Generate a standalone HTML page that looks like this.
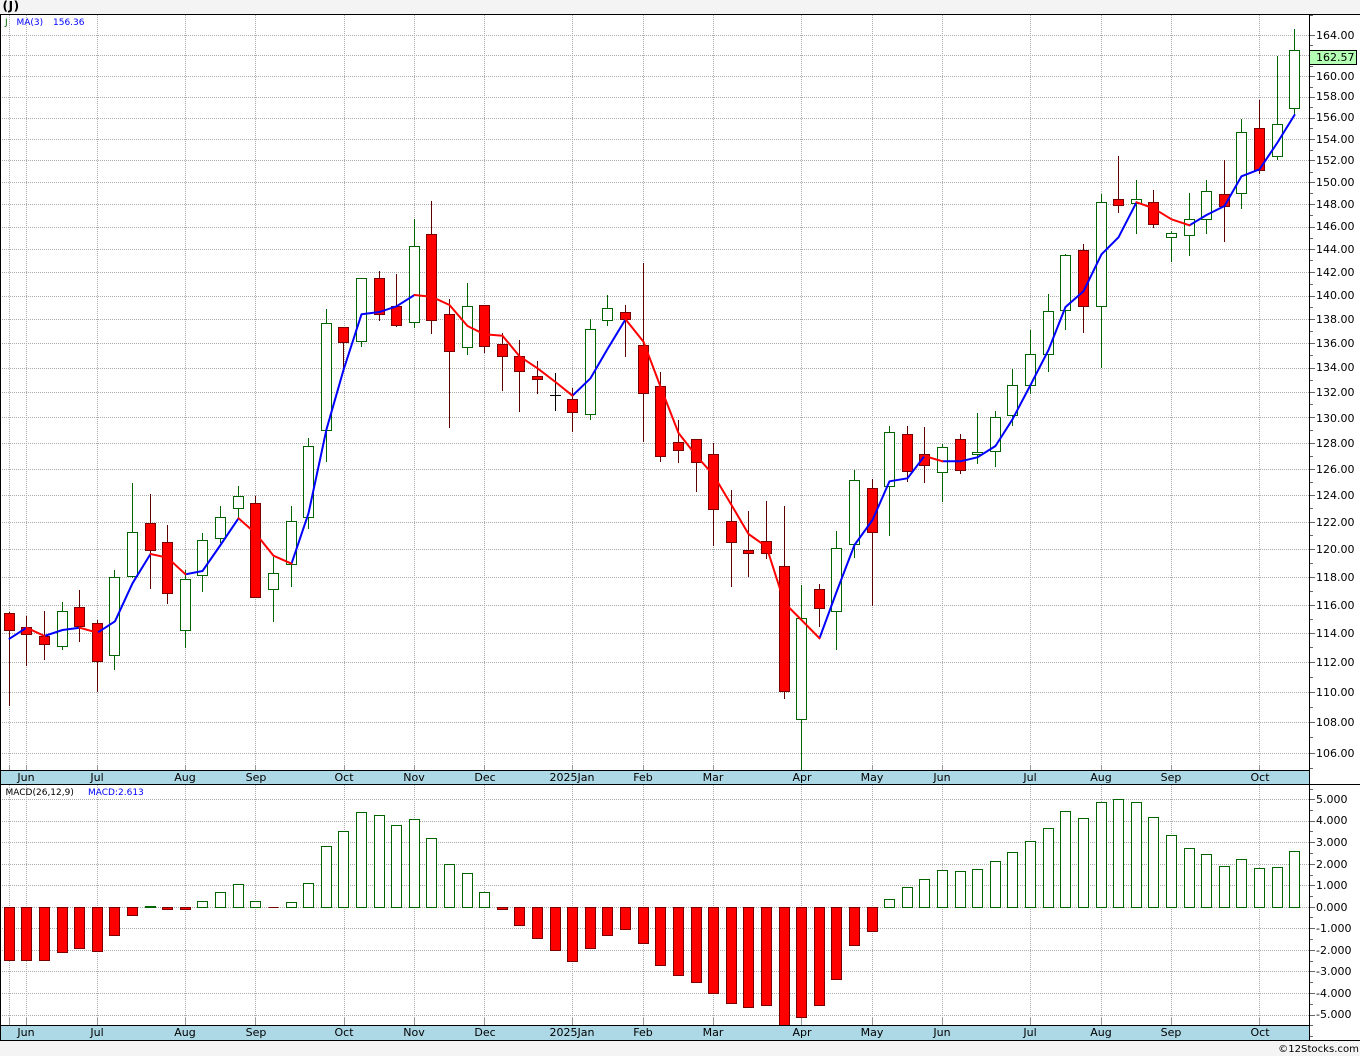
<!DOCTYPE html>
<html><head><meta charset="utf-8"><title>(J)</title>
<style>
html,body{margin:0;padding:0;background:#fff;width:1360px;height:1056px;overflow:hidden}
svg{display:block}
text{font-family:"DejaVu Sans","Liberation Sans",sans-serif;font-size:11px;fill:#000}
.s{font-size:9px}
.gr{stroke:#006400;stroke-width:1;fill:none;shape-rendering:crispEdges}
.rd{stroke:#5e0000;stroke-width:1;fill:none;shape-rendering:crispEdges}
.gb{stroke:#006400;stroke-width:1;fill:#fff;shape-rendering:crispEdges}
.rb{stroke:#7a0000;stroke-width:1;fill:#f00;shape-rendering:crispEdges}
.ma{fill:none;stroke-width:2;stroke-linejoin:round;stroke-linecap:round}
</style></head>
<body>
<svg width="1360" height="1056" viewBox="0 0 1360 1056" xmlns="http://www.w3.org/2000/svg">
<rect x="0" y="0" width="1360" height="14" fill="#f4f4f4"/>
<rect x="0" y="1041" width="1360" height="15" fill="#f4f4f4"/>
<rect x="0" y="771" width="1309" height="13" fill="#add8e6"/>
<rect x="0" y="1026" width="1309" height="14" fill="#add8e6"/>

<!-- grid -->
<path d="M0 35.5H1309M0 55.5H1309M0 76.5H1309M0 97.5H1309M0 118.5H1309M0 139.5H1309M0 160.5H1309M0 182.5H1309M0 204.5H1309M0 227.5H1309M0 249.5H1309M0 272.5H1309M0 296.5H1309M0 319.5H1309M0 343.5H1309M0 368.5H1309M0 392.5H1309M0 417.5H1309M0 443.5H1309M0 469.5H1309M0 495.5H1309M0 522.5H1309M0 549.5H1309M0 577.5H1309M0 605.5H1309M0 633.5H1309M0 662.5H1309M0 692.5H1309M0 722.5H1309M0 753.5H1309M0 799.5H1309M0 821.5H1309M0 842.5H1309M0 864.5H1309M0 885.5H1309M0 907.5H1309M0 928.5H1309M0 950.5H1309M0 971.5H1309M0 993.5H1309M0 1015.5H1309" stroke="#ababab" stroke-width="1" stroke-dasharray="1 1" fill="none" shape-rendering="crispEdges"/>
<path d="M9.5 15V770M26.5 15V770M97.5 15V770M185.5 15V770M255.5 15V770M344.5 15V770M414.5 15V770M484.5 15V770M572.5 15V770M643.5 15V770M713.5 15V770M801.5 15V770M872.5 15V770M942.5 15V770M1030.5 15V770M1101.5 15V770M1171.5 15V770M1259.5 15V770M9.5 785V1025M26.5 785V1025M97.5 785V1025M185.5 785V1025M255.5 785V1025M344.5 785V1025M414.5 785V1025M484.5 785V1025M572.5 785V1025M643.5 785V1025M713.5 785V1025M801.5 785V1025M872.5 785V1025M942.5 785V1025M1030.5 785V1025M1101.5 785V1025M1171.5 785V1025M1259.5 785V1025" stroke="#ababab" stroke-width="1" stroke-dasharray="1 1" fill="none" shape-rendering="crispEdges"/>
<path d="M9.5 1018V1025M26.5 1018V1025M97.5 1018V1025M185.5 1018V1025M255.5 1018V1025M344.5 1018V1025M414.5 1018V1025M484.5 1018V1025M572.5 1018V1025M643.5 1018V1025M713.5 1018V1025M801.5 1018V1025M872.5 1018V1025M942.5 1018V1025M1030.5 1018V1025M1101.5 1018V1025M1171.5 1018V1025M1259.5 1018V1025M9.5 765V770M26.5 765V770M97.5 765V770M185.5 765V770M255.5 765V770M344.5 765V770M414.5 765V770M484.5 765V770M572.5 765V770M643.5 765V770M713.5 765V770M801.5 765V770M872.5 765V770M942.5 765V770M1030.5 765V770M1101.5 765V770M1171.5 765V770M1259.5 765V770" stroke="#999" stroke-width="1" fill="none" shape-rendering="crispEdges"/>

<!-- wicks green -->
<path class="gr" d="M62.5 602V650M114.5 570V670M132.5 483V578M185.5 570V648M202.5 533V592M220.5 506V543M238.5 486V518M273.5 557V622M291.5 506V587M308.5 438V529M326.5 309V462M361.5 278V347M414.5 219V328M467.5 283V355M590.5 319V420M607.5 295V326M801.5 585V770M836.5 531V650M854.5 470V558M889.5 426V536M942.5 444V502M977.5 413V464M995.5 411V467M1012.5 369V426M1030.5 330V394M1048.5 294V372M1065.5 254V330M1101.5 194V368M1136.5 180V234M1171.5 231V262M1189.5 193V256M1206.5 180V234M1241.5 119V209M1277.5 56V160M1294.5 29V115"/>
<!-- wicks red -->
<path class="rd" d="M9.5 612V706M26.5 616V666M44.5 611V660M79.5 590V642M97.5 620V692M150.5 494V589M167.5 525V604M255.5 496V598M343.5 327V369M379.5 271V321M396.5 274V327M431.5 201V334M449.5 299V428M484.5 305V353M502.5 333V391M519.5 340V412M537.5 361V394M572.5 388V432M625.5 305V357M643.5 263V442M660.5 372V462M678.5 420V463M696.5 439V492M713.5 443V546M731.5 490V587M748.5 511V577M766.5 501V559M784.5 506V699M819.5 584V627M872.5 479V606M907.5 426V482M924.5 427V483M960.5 434V474M1083.5 244V333M1118.5 156V213M1153.5 190V228M1224.5 160V242M1259.5 100V174"/>
<!-- doji -->
<path d="M555.5 373V411M550 395.5H561" stroke="#000" stroke-width="1" fill="none" shape-rendering="crispEdges"/>
<!-- bodies green -->
<path class="gb" d="M57.5 611.5h10v35h-10zM109.5 577.5h10v78h-10zM127.5 532.5h10v44h-10zM180.5 579.5h10v51h-10zM197.5 540.5h10v35h-10zM215.5 517.5h10v21h-10zM233.5 496.5h10v12h-10zM268.5 573.5h10v16h-10zM286.5 521.5h10v43h-10zM303.5 446.5h10v71h-10zM321.5 323.5h10v107h-10zM356.5 278.5h10v63h-10zM409.5 246.5h10v76h-10zM462.5 306.5h10v41h-10zM585.5 329.5h10v85h-10zM602.5 308.5h10v12h-10zM796.5 618.5h10v101h-10zM831.5 548.5h10v63h-10zM849.5 480.5h10v64h-10zM884.5 432.5h10v54h-10zM937.5 447.5h10v25h-10zM972.5 452.5h10v2h-10zM990.5 417.5h10v34h-10zM1007.5 385.5h10v30h-10zM1025.5 354.5h10v31h-10zM1043.5 311.5h10v43h-10zM1060.5 255.5h10v55h-10zM1096.5 202.5h10v104h-10zM1131.5 199.5h10v4h-10zM1166.5 233.5h10v4h-10zM1184.5 219.5h10v16h-10zM1201.5 191.5h10v28h-10zM1236.5 132.5h10v61h-10zM1272.5 124.5h10v32h-10zM1289.5 50.5h10v58h-10z"/>
<!-- bodies red -->
<path class="rb" d="M4.5 613.5h10v17h-10zM21.5 627.5h10v7h-10zM39.5 636.5h10v8h-10zM74.5 607.5h10v19h-10zM92.5 623.5h10v38h-10zM145.5 523.5h10v27h-10zM162.5 542.5h10v51h-10zM250.5 503.5h10v94h-10zM338.5 327.5h10v15h-10zM374.5 278.5h10v36h-10zM391.5 306.5h10v19h-10zM426.5 234.5h10v86h-10zM444.5 314.5h10v37h-10zM479.5 305.5h10v41h-10zM497.5 344.5h10v12h-10zM514.5 356.5h10v15h-10zM532.5 376.5h10v3h-10zM567.5 399.5h10v13h-10zM620.5 312.5h10v7h-10zM638.5 345.5h10v48h-10zM655.5 386.5h10v70h-10zM673.5 442.5h10v8h-10zM691.5 439.5h10v23h-10zM708.5 454.5h10v55h-10zM726.5 521.5h10v21h-10zM743.5 550.5h10v3h-10zM761.5 541.5h10v12h-10zM779.5 566.5h10v125h-10zM814.5 589.5h10v19h-10zM867.5 488.5h10v44h-10zM902.5 434.5h10v37h-10zM919.5 454.5h10v11h-10zM955.5 439.5h10v31h-10zM1078.5 250.5h10v56h-10zM1113.5 199.5h10v6h-10zM1148.5 202.5h10v22h-10zM1219.5 194.5h10v12h-10zM1254.5 128.5h10v42h-10z"/>

<!-- MA -->
<g class="ma" stroke="#0000ff">
<polyline points="9.5,638.7 26.5,627.7"/>
<polyline points="44.5,636 62.5,630 79.5,627.7"/>
<polyline points="97.5,632.7 115,621.3 132.5,583.3 150.5,554"/>
<polyline points="185.5,574.3 202.5,571 220.5,545 238.5,518.3"/>
<polyline points="291.5,563.7 308.5,513.3 326.5,429.3 343.5,370 361.5,314.3 379.5,312 396.5,306.3 414.5,295"/>
<polyline points="572.5,395.7 590.5,378.3 607.5,349 625.5,319.3"/>
<polyline points="819.5,638.3 836.5,592 854.5,545 872.5,520 889.5,481.3 907.5,478.3 924.5,456"/>
<polyline points="942.5,461.3 960.5,461.3 977.5,457.3 995.5,446 1012.5,419.3 1030.5,385 1048.5,350 1065.5,307 1083.5,291.3 1101.5,254.3 1118.5,237.3 1136.5,202.3"/>
<polyline points="1189.5,225.3 1206.5,215 1224.5,206 1241.5,176.3 1259.5,169.3 1277.5,142.5 1294.5,115"/>
</g>
<g class="ma" stroke="#ff0000">
<polyline points="26.5,627.7 44.5,636"/>
<polyline points="79.5,627.7 97.5,632.7"/>
<polyline points="150.5,554 167.5,557.7 185.5,574.3"/>
<polyline points="238.5,518.3 255.5,533.3 273.5,555.7 291.5,563.7"/>
<polyline points="414.5,295 431.5,296.7 449.5,305 467.5,326 484.5,334.3 502.5,335.7 519.5,356.3 537.5,368.3 555.5,382 572.5,395.7"/>
<polyline points="625.5,319.3 643.5,341.7 660.5,386.7 678.5,433 696.5,456 713.5,475 731.5,505 748.5,534 766.5,546.7 784.5,603 801.5,620 819.5,638.3"/>
<polyline points="924.5,456 942.5,461.3"/>
<polyline points="1136.5,202.3 1153.5,208.3 1171.5,219.3 1189.5,225.3"/>
</g>

<!-- MACD green -->
<path class="gb" d="M145.5 906.5h10v1h-10zM197.5 901.5h10V907.5h-10zM215.5 892.5h10V907.5h-10zM233.5 884.5h10V907.5h-10zM250.5 901.5h10V907.5h-10zM286.5 902.5h10V907.5h-10zM303.5 883.5h10V907.5h-10zM321.5 846.5h10V907.5h-10zM338.5 831.5h10V907.5h-10zM356.5 812.5h10V907.5h-10zM374.5 815.5h10V907.5h-10zM391.5 825.5h10V907.5h-10zM409.5 819.5h10V907.5h-10zM426.5 838.5h10V907.5h-10zM444.5 864.5h10V907.5h-10zM462.5 873.5h10V907.5h-10zM479.5 892.5h10V907.5h-10zM884.5 899.5h10V907.5h-10zM902.5 887.5h10V907.5h-10zM919.5 879.5h10V907.5h-10zM937.5 870.5h10V907.5h-10zM955.5 871.5h10V907.5h-10zM972.5 869.5h10V907.5h-10zM990.5 861.5h10V907.5h-10zM1007.5 852.5h10V907.5h-10zM1025.5 841.5h10V907.5h-10zM1043.5 828.5h10V907.5h-10zM1060.5 811.5h10V907.5h-10zM1078.5 818.5h10V907.5h-10zM1096.5 802.5h10V907.5h-10zM1113.5 799.5h10V907.5h-10zM1131.5 802.5h10V907.5h-10zM1148.5 817.5h10V907.5h-10zM1166.5 835.5h10V907.5h-10zM1184.5 848.5h10V907.5h-10zM1201.5 854.5h10V907.5h-10zM1219.5 866.5h10V907.5h-10zM1236.5 859.5h10V907.5h-10zM1254.5 868.5h10V907.5h-10zM1272.5 867.5h10V907.5h-10zM1289.5 851.5h10V907.5h-10z"/>
<!-- MACD red -->
<path class="rb" d="M4.5 907.5h10V960.5h-10zM21.5 907.5h10V960.5h-10zM39.5 907.5h10V960.5h-10zM57.5 907.5h10V952.5h-10zM74.5 907.5h10V948.5h-10zM92.5 907.5h10V951.5h-10zM109.5 907.5h10V935.5h-10zM127.5 907.5h10V915.5h-10zM162.5 907.5h10V909.5h-10zM180.5 907.5h10V909.5h-10zM268.5 907.5h10zM497.5 907.5h10V909.5h-10zM514.5 907.5h10V925.5h-10zM532.5 907.5h10V938.5h-10zM550.5 907.5h10V950.5h-10zM567.5 907.5h10V961.5h-10zM585.5 907.5h10V948.5h-10zM602.5 907.5h10V935.5h-10zM620.5 907.5h10V929.5h-10zM638.5 907.5h10V943.5h-10zM655.5 907.5h10V965.5h-10zM673.5 907.5h10V975.5h-10zM691.5 907.5h10V982.5h-10zM708.5 907.5h10V993.5h-10zM726.5 907.5h10V1003.5h-10zM743.5 907.5h10V1007.5h-10zM761.5 907.5h10V1005.5h-10zM779.5 907.5h10V1025.5h-10zM796.5 907.5h10V1017.5h-10zM814.5 907.5h10V1005.5h-10zM831.5 907.5h10V979.5h-10zM849.5 907.5h10V945.5h-10zM867.5 907.5h10V931.5h-10z"/>

<!-- axis ticks -->
<path d="M1310 35.5h5M1310 55.5h5M1310 76.5h5M1310 97.5h5M1310 118.5h5M1310 139.5h5M1310 160.5h5M1310 182.5h5M1310 204.5h5M1310 227.5h5M1310 249.5h5M1310 272.5h5M1310 296.5h5M1310 319.5h5M1310 343.5h5M1310 368.5h5M1310 392.5h5M1310 417.5h5M1310 443.5h5M1310 469.5h5M1310 495.5h5M1310 522.5h5M1310 549.5h5M1310 577.5h5M1310 605.5h5M1310 633.5h5M1310 662.5h5M1310 692.5h5M1310 722.5h5M1310 753.5h5M1310 799.5h5M1310 821.5h5M1310 842.5h5M1310 864.5h5M1310 885.5h5M1310 907.5h5M1310 928.5h5M1310 950.5h5M1310 971.5h5M1310 993.5h5M1310 1015.5h5" stroke="#666" stroke-width="1" fill="none" shape-rendering="crispEdges"/>
<path d="M1310 15.5h3M1310 45.5h3M1310 66.5h3M1310 87.5h3M1310 107.5h3M1310 128.5h3M1310 150.5h3M1310 172.5h3M1310 193.5h3M1310 215.5h3M1310 238.5h3M1310 260.5h3M1310 284.5h3M1310 307.5h3M1310 331.5h3M1310 355.5h3M1310 380.5h3M1310 404.5h3M1310 430.5h3M1310 456.5h3M1310 482.5h3M1310 508.5h3M1310 535.5h3M1310 563.5h3M1310 591.5h3M1310 619.5h3M1310 647.5h3M1310 677.5h3M1310 707.5h3M1310 737.5h3M1310 768.5h3M1310 789.5h3M1310 810.5h3M1310 831.5h3M1310 853.5h3M1310 875.5h3M1310 896.5h3M1310 917.5h3M1310 939.5h3M1310 961.5h3M1310 982.5h3M1310 1004.5h3M1310 1025.5h3M1310 1036.5h3" stroke="#666" stroke-width="1" fill="none" shape-rendering="crispEdges"/>

<!-- frame lines -->
<path d="M0 14.5H1360M0 770.5H1309M0 784.5H1360M0 1025.5H1309M0 1040.5H1360M0.5 14V1040M1309.5 14V1040" stroke="#000" stroke-width="1" fill="none" shape-rendering="crispEdges"/>

<!-- price box -->
<rect x="1309.5" y="50.5" width="47" height="14" fill="#b4ffb4" stroke="#000" stroke-width="1" shape-rendering="crispEdges"/>

<!-- price labels -->
<g>
<text x="1316" y="39">164.00</text>
<text x="1316" y="61">162.57</text>
<text x="1316" y="80">160.00</text>
<text x="1316" y="100">158.00</text>
<text x="1316" y="121">156.00</text>
<text x="1316" y="143">154.00</text>
<text x="1316" y="164">152.00</text>
<text x="1316" y="186">150.00</text>
<text x="1316" y="208">148.00</text>
<text x="1316" y="230">146.00</text>
<text x="1316" y="253">144.00</text>
<text x="1316" y="276">142.00</text>
<text x="1316" y="299">140.00</text>
<text x="1316" y="323">138.00</text>
<text x="1316" y="347">136.00</text>
<text x="1316" y="371">134.00</text>
<text x="1316" y="396">132.00</text>
<text x="1316" y="422">130.00</text>
<text x="1316" y="447">128.00</text>
<text x="1316" y="473">126.00</text>
<text x="1316" y="499">124.00</text>
<text x="1316" y="526">122.00</text>
<text x="1316" y="553">120.00</text>
<text x="1316" y="581">118.00</text>
<text x="1316" y="609">116.00</text>
<text x="1316" y="637">114.00</text>
<text x="1316" y="666">112.00</text>
<text x="1316" y="696">110.00</text>
<text x="1316" y="726">108.00</text>
<text x="1316" y="757">106.00</text>
<text x="1316" y="803">5.000</text>
<text x="1316" y="824">4.000</text>
<text x="1316" y="846">3.000</text>
<text x="1316" y="868">2.000</text>
<text x="1316" y="889">1.000</text>
<text x="1316" y="911">0.000</text>
<text x="1316" y="932">-1.000</text>
<text x="1316" y="954">-2.000</text>
<text x="1316" y="975">-3.000</text>
<text x="1316" y="997">-4.000</text>
<text x="1316" y="1018">-5.000</text>
</g>

<!-- months -->
<g text-anchor="middle">
<text x="26" y="781">Jun</text><text x="97" y="781">Jul</text><text x="185" y="781">Aug</text><text x="256" y="781">Sep</text><text x="344" y="781">Oct</text><text x="414" y="781">Nov</text><text x="485" y="781">Dec</text><text x="572" y="781">2025Jan</text><text x="643" y="781">Feb</text><text x="713" y="781">Mar</text><text x="802" y="781">Apr</text><text x="872" y="781">May</text><text x="942" y="781">Jun</text><text x="1030" y="781">Jul</text><text x="1101" y="781">Aug</text><text x="1171" y="781">Sep</text><text x="1260" y="781">Oct</text>
<text x="26" y="1036">Jun</text><text x="97" y="1036">Jul</text><text x="185" y="1036">Aug</text><text x="256" y="1036">Sep</text><text x="344" y="1036">Oct</text><text x="414" y="1036">Nov</text><text x="485" y="1036">Dec</text><text x="572" y="1036">2025Jan</text><text x="643" y="1036">Feb</text><text x="713" y="1036">Mar</text><text x="802" y="1036">Apr</text><text x="872" y="1036">May</text><text x="942" y="1036">Jun</text><text x="1030" y="1036">Jul</text><text x="1101" y="1036">Aug</text><text x="1171" y="1036">Sep</text><text x="1260" y="1036">Oct</text>
</g>

<!-- titles -->
<text x="2.5" y="10" style="font-weight:bold;font-size:12px;letter-spacing:.6px">(J)</text>
<text class="s" x="5" y="25" style="fill:#006400">J</text>
<text class="s" x="16.5" y="25" style="fill:#0000ff">MA(3)</text>
<text class="s" x="53" y="25" style="fill:#0000ff">156.36</text>
<text class="s" x="5.5" y="795">MACD(26,12,9)</text>
<text class="s" x="88" y="795" style="fill:#0000ff">MACD:2.613</text>
<text x="1359" y="1052" text-anchor="end" style="font-size:10.1px">©12Stocks.com</text>
</svg>
</body></html>
